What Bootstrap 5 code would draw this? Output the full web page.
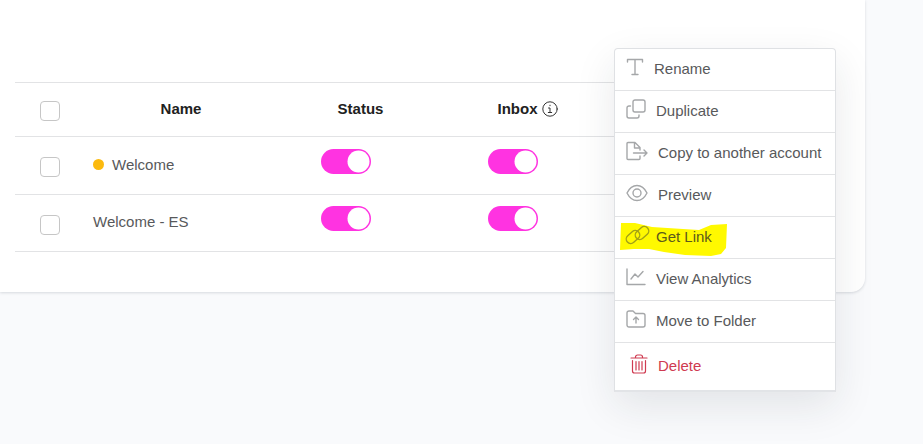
<!DOCTYPE html>
<html lang="en">
<head>
<meta charset="utf-8">
<meta name="viewport" content="width=device-width, initial-scale=1">
<title>Messages</title>
<link href="https://cdn.jsdelivr.net/npm/bootstrap@5.3.0/dist/css/bootstrap.min.css" rel="stylesheet">
<style>
body { font-family: "Liberation Sans", Arial, sans-serif; font-size: 15px; line-height: 20px; background: #f9fafc; color: #58595b; }
.panel { margin-right: 58px; padding: 82px 30px 40px 15px; background: #fff; border-bottom-right-radius: 14px; box-shadow: 0 1px 3px rgba(40, 50, 70, .16); }
.flows { --bs-table-bg: transparent; table-layout: fixed; border-top: 1px solid #e2e3e5; color: #58595b; }
.flows > :not(caption) > * > * { padding: 0 8px 2px; border-bottom: 1px solid #e2e3e5; color: inherit; vertical-align: middle; }
.flows thead tr { height: 54px; color: #212121; }
.flows tbody tr { height: 58px; }
.flows tbody tr:last-child { height: 57px; }
.col-pick { width: 70px; }
.col-name { width: 192px; }
.col-state { width: 167px; }
.pick.form-check-input { display: block; width: 20px; height: 20px; margin: 5px auto 0; border: 1px solid #c6c6c6; border-radius: 4px; }
.flows .switch-cell { padding-right: 38px; }
.toggle.form-check-input { display: block; width: 50px; height: 25px; margin: 0 auto 7px; border: 0; border-radius: 25px; background-color: #ff33e1; background-position: right center; background-repeat: no-repeat;
  background-image: url("data:image/svg+xml,%3csvg xmlns='http://www.w3.org/2000/svg' viewBox='0 0 25 25'%3e%3ccircle cx='12.5' cy='12.5' r='11' fill='%23fff'/%3e%3c/svg%3e"); }
.dot { width: 11px; height: 11px; background: #fcba0e; }
.actions.dropdown-menu { top: 48px; right: 29px; width: 222px; padding: 0; border: 1px solid #dfe1e4; border-bottom: 2px solid #e2e4e7; border-radius: 4px 4px 0 0; font-size: 15px; color: #58595b; box-shadow: 0 14px 40px rgba(30, 35, 45, .1); overflow: hidden; }
.actions .dropdown-item { display: flex; align-items: center; gap: 10px; height: 42px; padding: 0 0 2px 11px; color: #58595b; border-bottom: 1px solid #e2e3e5; line-height: 20px; }
.actions li:last-child .dropdown-item { height: 47px; padding-left: 15px; border: 0; color: #cf3a50; }
.actions svg, .tip svg { flex: none; fill: none; stroke: #a5a7a9; stroke-width: 1.4; stroke-linecap: round; stroke-linejoin: round; }
.actions svg { margin-top: -4px; }
.actions li:last-child svg { stroke: #cf3a50; stroke-width: 1.2; }
.tip svg { display: block; stroke: #333; stroke-width: 1; }
.marked { position: relative; }
.actions .marker { position: absolute; left: 5px; top: 6px; margin: 0; fill: #fff900; stroke: none; }
.marked > svg:not(.marker), .marked > span { position: relative; }
.marked > svg:not(.marker) { stroke: #a3a116; }
.marked > span { color: #5c5a1c; }
</style>
<script src="https://cdn.jsdelivr.net/npm/bootstrap@5.3.0/dist/js/bootstrap.bundle.min.js"></script>
</head>
<body class="min-vh-100">
<main class="panel position-relative">
  <table class="table flows mb-0">
    <colgroup><col class="col-pick"><col class="col-name"><col class="col-state"><col class="col-state"><col></colgroup>
    <thead>
      <tr>
        <th scope="col"><input class="form-check-input pick" type="checkbox" aria-label="Select all"></th>
        <th scope="col" class="text-center">Name</th>
        <th scope="col" class="text-center">Status</th>
        <th scope="col"><div class="d-flex justify-content-center align-items-center gap-1">Inbox
          <button type="button" class="btn p-0 border-0 tip" aria-label="About Inbox"><svg width="16" height="16" viewBox="0 0 16 16"><circle cx="8" cy="8" r="7.2"/><path d="M6.5 7H8v4.5M6.3 11.5h3.4M8 4.2v.5"/></svg></button></div></th>
        <td></td>
      </tr>
    </thead>
    <tbody>
      <tr>
        <td><input class="form-check-input pick" type="checkbox" aria-label="Select Welcome"></td>
        <td><div class="d-flex align-items-center gap-2"><span class="dot rounded-circle"></span><span>Welcome</span></div></td>
        <td class="switch-cell"><input class="form-check-input toggle" type="checkbox" role="switch" checked aria-label="Welcome status"></td>
        <td class="switch-cell"><input class="form-check-input toggle" type="checkbox" role="switch" checked aria-label="Welcome inbox"></td>
        <td></td>
      </tr>
      <tr>
        <td><input class="form-check-input pick" type="checkbox" aria-label="Select Welcome - ES"></td>
        <td>Welcome - ES</td>
        <td class="switch-cell"><input class="form-check-input toggle" type="checkbox" role="switch" checked aria-label="Welcome - ES status"></td>
        <td class="switch-cell"><input class="form-check-input toggle" type="checkbox" role="switch" checked aria-label="Welcome - ES inbox"></td>
        <td></td>
      </tr>
    </tbody>
  </table>

  <ul class="dropdown-menu show actions">
    <li><a class="dropdown-item" href="#"><svg width="18" height="18" viewBox="0 0 18 18"><path d="M1.500 4V1.500h15V4M9 1.500v15M6 16.500h6"/></svg><span>Rename</span></a></li>
    <li><a class="dropdown-item" href="#"><svg width="20" height="20" viewBox="0 0 20 20"><rect x="7" y="1" width="12" height="12" rx="2"/><path d="M4.500 7H3a2 2 0 0 0-2 2v8a2 2 0 0 0 2 2h8a2 2 0 0 0 2-2v-1"/></svg><span>Duplicate</span></a></li>
    <li><a class="dropdown-item" href="#"><svg width="22" height="20" viewBox="0 0 22 20"><path d="M14 15v2.500a1 1 0 0 1-1 1H2a1 1 0 0 1-1-1v-15a1 1 0 0 1 1-1h7l5 5V9M8.500 1.500V7H14M7.500 12H21M18 9l3 3-3 3"/></svg><span>Copy to another account</span></a></li>
    <li><a class="dropdown-item" href="#"><svg width="22" height="18" viewBox="0 0 22 18"><path d="M1 9c2.500-5 6-7.500 10-7.500S18.500 4 21 9c-2.500 5-6 7.500-10 7.500S3.500 14 1 9z"/><circle cx="11" cy="9" r="4"/></svg><span>Preview</span></a></li>
    <li><a class="dropdown-item marked" href="#"><svg class="marker" width="107" height="34" viewBox="0 0 107 34"><path d="M1 0 15 0 32 4 63 6 79 7 91 2 107 1 106 25 101 31 91 33 65 32 44 29 29 26 14 26 0 27z"/></svg><svg width="20" height="20" viewBox="0 0 20 20" overflow="visible"><rect x="-7.500" y="-4.500" width="15" height="9" rx="4.500" transform="translate(7 12) rotate(-42)"/><rect x="-7.500" y="-4.500" width="15" height="9" rx="4.500" transform="translate(16 8) rotate(-42)"/></svg><span>Get Link</span></a></li>
    <li><a class="dropdown-item" href="#"><svg width="20" height="18" viewBox="0 0 20 18"><path d="M1 1v15.500h18M5 11l4-5 3 3 5-5.500"/></svg><span>View Analytics</span></a></li>
    <li><a class="dropdown-item" href="#"><svg width="20" height="18" viewBox="0 0 20 18"><path d="M1 15V3a2 2 0 0 1 2-2h4l2.500 2.500H17a2 2 0 0 1 2 2V15a2 2 0 0 1-2 2H3a2 2 0 0 1-2-2zM10 13V7.500M7.500 9.500 10 7l2.500 2.500"/></svg><span>Move to Folder</span></a></li>
    <li><a class="dropdown-item" href="#"><svg width="18" height="20" viewBox="0 0 18 20"><path d="M1 4h16M5.500 4V3a2 2 0 0 1 2-2h3a2 2 0 0 1 2 2v1M2.500 6.500v10.500a2 2 0 0 0 2 2h9a2 2 0 0 0 2-2V6.500M6 7.500v8.500M9 7.500v8.500M12 7.500v8.500"/></svg><span>Delete</span></a></li>
  </ul>
</main>
</body>
</html>
